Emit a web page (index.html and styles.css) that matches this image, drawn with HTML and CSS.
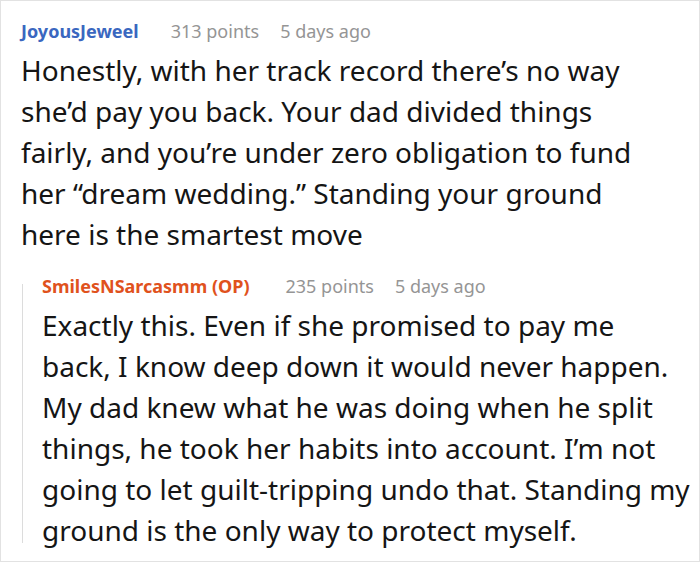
FILE: index.html
```html
<!DOCTYPE html>
<html lang="en">
<head>
<meta charset="utf-8">
<title>Comments</title>
<link rel="stylesheet" href="styles.css">
</head>
<body>
<div class="frame">
  <div class="comment">
    <div class="meta">
      <span class="user user-blue">JoyousJeweel</span>
      <span class="points">313 points</span>
      <span class="time">5 days ago</span>
    </div>
    <p class="text">Honestly, with her track record there’s no way she’d pay you back. Your dad divided things fairly, and you’re under zero obligation to fund her “dream wedding.” Standing your ground here is the smartest move</p>
  </div>
  <div class="comment reply">
    <div class="meta">
      <span class="user user-orange">SmilesNSarcasmm (OP)</span>
      <span class="points">235 points</span>
      <span class="time">5 days ago</span>
    </div>
    <p class="text">Exactly this. Even if she promised to pay me<br>back, I know deep down it would never happen. My dad knew what he was doing when he split things, he took her habits into account. I’m not going to let guilt-tripping undo that. Standing my ground is the only way to protect myself.</p>
  </div>
</div>
</body>
</html>
```

FILE: styles.css
```css
html, body {
  margin: 0;
  padding: 0;
  background: #ffffff;
}

.frame {
  box-sizing: border-box;
  width: 700px;
  height: 562px;
  border: 1px solid #e2e2e2;
  padding: 18px 0 0 20px;
  font-family: "Noto Sans", "Open Sans", sans-serif;
  overflow: hidden;
}

.meta {
  display: flex;
  align-items: baseline;
  font-size: 18px;
  line-height: 24px;
  margin-bottom: 7px;
}

.user {
  font-weight: 700;
  margin-right: 32px;
}

.user-blue { color: #3a67c0; }
.user-orange { color: #e0521d; }

.reply .user {
  margin-right: 36px;
}

.points {
  color: #959595;
  margin-right: 21px;
}

.time {
  color: #959595;
}

.text {
  margin: 0;
  font-size: 28px;
  line-height: 41px;
  color: #151515;
  width: 630px;
}

.reply {
  position: relative;
  margin-top: 19px;
  padding-left: 21px;
}

.reply::before {
  content: "";
  position: absolute;
  left: 1px;
  top: 10px;
  bottom: 8px;
  width: 1px;
  background: #dcdcdc;
}

.reply .text {
  width: 649px;
}
```
